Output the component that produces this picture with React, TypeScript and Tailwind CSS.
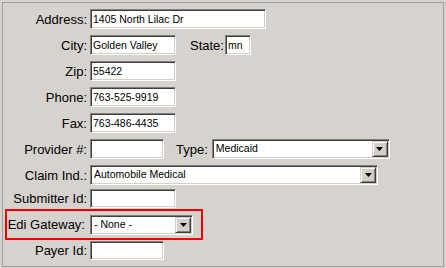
import React from "react";

const sunken =
  "border border-t-[#808080] border-l-[#808080] border-b-white border-r-white shadow-[inset_1px_1px_0_#404040,inset_-1px_-1px_0_#d4d0c8] bg-white";

function Input({ cls, value }: { cls: string; value?: string }) {
  return (
    <div className={`${sunken} ${cls} flex items-center pl-[2px] pt-[1px] text-[10.5px] text-black whitespace-nowrap overflow-hidden`}>
      {value}
    </div>
  );
}

function Select({ cls, value }: { cls: string; value: string }) {
  return (
    <div className={`${sunken} ${cls} h-[20px] p-[1px] flex items-center text-[10.5px] text-black whitespace-nowrap`}>
      <span className="pl-[2px] flex-1 overflow-hidden">{value}</span>
      <div className="h-[16px] w-[16px] bg-[#d4d0c8] border border-t-[#d4d0c8] border-l-[#d4d0c8] border-b-[#404040] border-r-[#404040] shadow-[inset_1px_1px_0_#ffffff,inset_-1px_-1px_0_#808080] flex items-center justify-center">
        <svg width="7" height="4" viewBox="0 0 7 4">
          <path d="M0 0H7L3.5 4Z" fill="#000" />
        </svg>
      </div>
    </div>
  );
}

function Label({ text, cls = "w-[84px]" }: { text: string; cls?: string }) {
  return <div className={`${cls} text-right text-[13px] text-black shrink-0 leading-none whitespace-nowrap`}>{text}</div>;
}

export default function App() {
  return (
    <div className="w-[446px] h-[268px] bg-[#d6d3ce] p-[2px] font-['Liberation_Sans',Arial,sans-serif]">
      <div className="w-[442px] h-[265px] border border-[#a0a0a0] pt-[3px] flex flex-col">
        <div className="h-[26px] flex items-center gap-[3px]">
          <Label text="Address:" />
          <Input cls="w-[176px] h-[20px]" value="1405 North Lilac Dr" />
        </div>
        <div className="h-[26px] flex items-center gap-[3px]">
          <Label text="City:" />
          <Input cls="w-[86px] h-[20px]" value="Golden Valley" />
          <div className="ml-[11px] text-[13px] leading-none">State:</div>
          <Input cls="w-[26px] h-[20px] -ml-[2px]" value="mn" />
        </div>
        <div className="h-[26px] flex items-center gap-[3px]">
          <Label text="Zip:" />
          <Input cls="w-[86px] h-[20px]" value="55422" />
        </div>
        <div className="h-[26px] flex items-center gap-[3px]">
          <Label text="Phone:" />
          <Input cls="w-[86px] h-[20px]" value="763-525-9919" />
        </div>
        <div className="h-[26px] flex items-center gap-[3px]">
          <Label text="Fax:" />
          <Input cls="w-[86px] h-[20px]" value="763-486-4435" />
        </div>
        <div className="h-[26px] flex items-center gap-[3px]">
          <Label text="Provider #:" />
          <Input cls="w-[74px] h-[20px]" value="" />
          <div className="ml-[9px] text-[13px] leading-none">Type:</div>
          <Select cls="w-[178px] ml-[1px]" value="Medicaid" />
        </div>
        <div className="h-[26px] flex items-center gap-[3px]">
          <Label text="Claim Ind.:" />
          <Select cls="w-[288px]" value="Automobile Medical" />
        </div>
        <div className="h-[21px] flex items-center gap-[3px]">
          <Label text="Submitter Id:" />
          <Input cls="w-[86px] h-[19px]" value="" />
        </div>
        <div className="h-[31px] w-[198px] ml-[2px] border-2 border-[#f00000] flex items-center gap-[5px]">
          <Label text="Edi Gateway:" cls="w-[78px]" />
          <Select cls="w-[103px]" value="- None -" />
        </div>
        <div className="h-[20px] flex items-center gap-[3px]">
          <Label text="Payer Id:" />
          <Input cls="w-[74px] h-[19px]" value="" />
        </div>
      </div>
    </div>
  );
}
